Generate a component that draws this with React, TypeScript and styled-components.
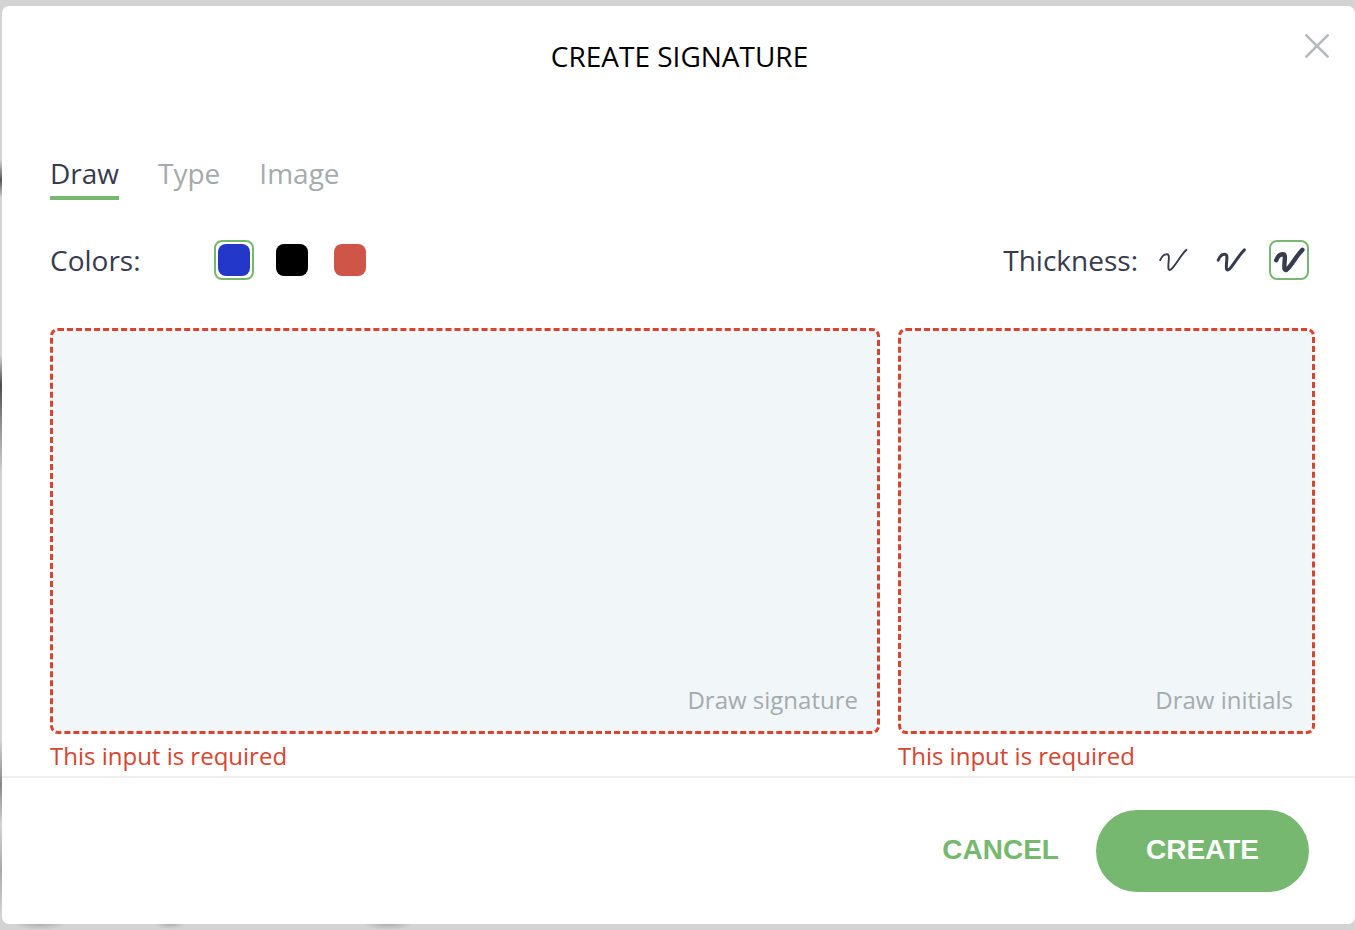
import React, { useState } from "react";
import styled, { createGlobalStyle } from "styled-components";

const color = {
  backdrop: "#d3d3d3",
  ink: "#373b4d",
  muted: "#a5abad",
  green: "#76b86f",
  error: "#d9442f",
  pad: "#f1f6f9",
  line: "#f0f0f0",
};

const GlobalStyle = createGlobalStyle`
  *, *::before, *::after { box-sizing: border-box; }
  body {
    margin: 0;
    font-family: "Open Sans", "Noto Sans", sans-serif;
    color: ${color.ink};
    background: ${color.backdrop};
  }
`;

const Backdrop = styled.div`
  min-height: 100vh;
  padding: 6px 0 6px 2px;
  background:
    linear-gradient(transparent 160px, #555 180px, transparent 198px) 0 0 / 2px 100% no-repeat,
    linear-gradient(transparent 355px, #4c4c4c 385px, #999 430px, transparent 475px) 0 0 / 2px 100% no-repeat,
    linear-gradient(transparent 740px, #888 785px, transparent 825px, #aaa 870px, transparent 915px) 0 0 / 2px 100% no-repeat,
    radial-gradient(ellipse 26px 7px at 40px 923px, #a8a8a8, transparent),
    radial-gradient(ellipse 16px 6px at 170px 923px, #aaa, transparent),
    radial-gradient(ellipse 26px 7px at 388px 923px, #a8a8a8, transparent),
    ${color.backdrop};
`;

const Dialog = styled.section`
  display: flex;
  flex-direction: column;
  min-height: calc(100vh - 12px);
  border-radius: 7px;
  background: #fff;
`;

const Header = styled.header`
  display: grid;
  grid-template-columns: 48px 1fr 48px;
  align-items: start;
  padding: 16px 14px 0 16px;
`;

const Title = styled.h1`
  grid-column: 2;
  margin: 0;
  padding: 15px 0 1px;
  font-size: 28px;
  line-height: 38px;
  font-weight: 400;
  color: #000;
  text-align: center;
`;

const CloseButton = styled.button`
  display: grid;
  place-items: center;
  width: 48px;
  height: 48px;
  padding: 0;
  border: 0;
  background: none;
  color: #b4b9bb;
  cursor: pointer;
`;

const Body = styled.div`
  flex: 1;
  display: flex;
  flex-direction: column;
  padding: 76px 40px 0 48px;
`;

const Tabs = styled.div`
  display: flex;
  gap: 39px;
`;

const Tab = styled.button<{ $active: boolean }>`
  padding: 0 0 2px;
  border: 0;
  border-bottom: 4px solid ${(p) => (p.$active ? color.green : "transparent")};
  background: none;
  font: inherit;
  font-size: 28px;
  line-height: 42px;
  color: ${(p) => (p.$active ? color.ink : color.muted)};
  cursor: pointer;
`;

const Options = styled.div`
  display: flex;
  justify-content: space-between;
  padding: 40px 6px 48px 0;
`;

const OptionGroup = styled.div<{ $gap: number }>`
  display: flex;
  align-items: center;
  gap: ${(p) => p.$gap}px;
`;

const OptionLabel = styled.span`
  font-size: 28px;
  line-height: 40px;
`;

const Choices = styled.div`
  display: flex;
  gap: 18px;
`;

const Choice = styled.label<{ $selected: boolean }>`
  display: grid;
  place-items: center;
  width: 40px;
  height: 40px;
  border: 2px solid ${(p) => (p.$selected ? color.green : "transparent")};
  border-radius: 8px;
  cursor: pointer;
`;

const HiddenRadio = styled.input`
  grid-area: 1 / 1;
  width: 32px;
  height: 32px;
  margin: 0;
  appearance: none;
`;

const Swatch = styled.span<{ $fill: string }>`
  grid-area: 1 / 1;
  width: 32px;
  height: 32px;
  border-radius: 8px;
  background: ${(p) => p.$fill};
`;

const StrokeIcon = styled.svg`
  grid-area: 1 / 1;
  display: block;
  width: 36px;
  height: 36px;
  overflow: visible;
`;

const Pads = styled.div`
  flex: 1;
  display: grid;
  grid-template-columns: 199fr 100fr;
  gap: 18px;
`;

const Field = styled.div`
  display: flex;
  flex-direction: column;
`;

const Pad = styled.div`
  flex: 1;
  display: flex;
  align-items: flex-end;
  justify-content: flex-end;
  min-height: 160px;
  padding: 0 19px 15px;
  border: 3px dashed ${color.error};
  border-radius: 8px;
  background: ${color.pad};
  font-size: 24px;
  line-height: 32px;
  color: ${color.muted};
`;

const ErrorText = styled.p`
  margin: 0;
  padding: 6px 0 4px;
  font-size: 24px;
  line-height: 32px;
  color: ${color.error};
`;

const Footer = styled.footer`
  display: flex;
  justify-content: flex-end;
  gap: 37px;
  padding: 32px 46px;
  border-top: 2px solid ${color.line};
`;

const Action = styled.button<{ $primary?: boolean }>`
  height: 82px;
  padding: ${(p) => (p.$primary ? "0 50px 2px" : "0 0 2px")};
  border: 0;
  border-radius: 41px;
  background: ${(p) => (p.$primary ? color.green : "none")};
  font-family: "Liberation Sans", Arial, sans-serif;
  font-size: 28px;
  font-weight: 700;
  color: ${(p) => (p.$primary ? "#fff" : color.green)};
  cursor: pointer;
`;

const tabs = ["Draw", "Type", "Image"];

const inks = [
  { name: "Blue", fill: "#2338c9" },
  { name: "Black", fill: "#000000" },
  { name: "Red", fill: "#cf5549" },
];

const strokes = [
  { name: "Thin", width: 1.9 },
  { name: "Medium", width: 3 },
  { name: "Thick", width: 4.4 },
];

const fields = [
  { id: "signature", hint: "Draw signature" },
  { id: "initials", hint: "Draw initials" },
];

export default function App() {
  const [tab, setTab] = useState("Draw");
  const [ink, setInk] = useState("Blue");
  const [stroke, setStroke] = useState("Thick");

  return (
    <>
      <GlobalStyle />
      <Backdrop>
        <Dialog role="dialog" aria-labelledby="dialog-title">
          <Header>
            <Title id="dialog-title">CREATE SIGNATURE</Title>
            <CloseButton type="button" aria-label="Close">
              <svg width="26" height="26" viewBox="0 0 26 26" fill="none" stroke="currentColor" strokeWidth="2.6" strokeLinecap="round">
                <path d="M2.3 2.3 23.7 23.7M23.7 2.3 2.3 23.7" />
              </svg>
            </CloseButton>
          </Header>

          <Body>
            <Tabs role="tablist">
              {tabs.map((name) => (
                <Tab key={name} type="button" role="tab" aria-selected={tab === name} $active={tab === name} onClick={() => setTab(name)}>
                  {name}
                </Tab>
              ))}
            </Tabs>

            <Options>
              <OptionGroup $gap={73} role="radiogroup" aria-labelledby="colors-label">
                <OptionLabel id="colors-label">Colors:</OptionLabel>
                <Choices>
                  {inks.map((item) => (
                    <Choice key={item.name} $selected={ink === item.name}>
                      <Swatch $fill={item.fill} />
                      <HiddenRadio type="radio" name="ink" aria-label={item.name} checked={ink === item.name} onChange={() => setInk(item.name)} />
                    </Choice>
                  ))}
                </Choices>
              </OptionGroup>

              <OptionGroup $gap={15} role="radiogroup" aria-labelledby="thickness-label">
                <OptionLabel id="thickness-label">Thickness:</OptionLabel>
                <Choices>
                  {strokes.map((item) => (
                    <Choice key={item.name} $selected={stroke === item.name}>
                      <StrokeIcon viewBox="2 2 36 36" fill="none" stroke="currentColor" strokeWidth={item.width} strokeLinecap="round" strokeLinejoin="round" aria-hidden="true">
                        <path d="M7.2 20.2C8.6 16.4 11.6 14.3 13.9 14.3C16 14.3 16 16.4 15.8 19.5C15.5 23 15 27.5 15.6 29.2C16.4 31 18.4 29.4 20 27.4C25.2 20.8 28.6 14.4 33.4 9.8" />
                      </StrokeIcon>
                      <HiddenRadio type="radio" name="stroke" aria-label={item.name} checked={stroke === item.name} onChange={() => setStroke(item.name)} />
                    </Choice>
                  ))}
                </Choices>
              </OptionGroup>
            </Options>

            <Pads>
              {fields.map((field) => (
                <Field key={field.id}>
                  <Pad>{field.hint}</Pad>
                  <ErrorText>This input is required</ErrorText>
                </Field>
              ))}
            </Pads>
          </Body>

          <Footer>
            <Action type="button">CANCEL</Action>
            <Action type="button" $primary>
              CREATE
            </Action>
          </Footer>
        </Dialog>
      </Backdrop>
    </>
  );
}
